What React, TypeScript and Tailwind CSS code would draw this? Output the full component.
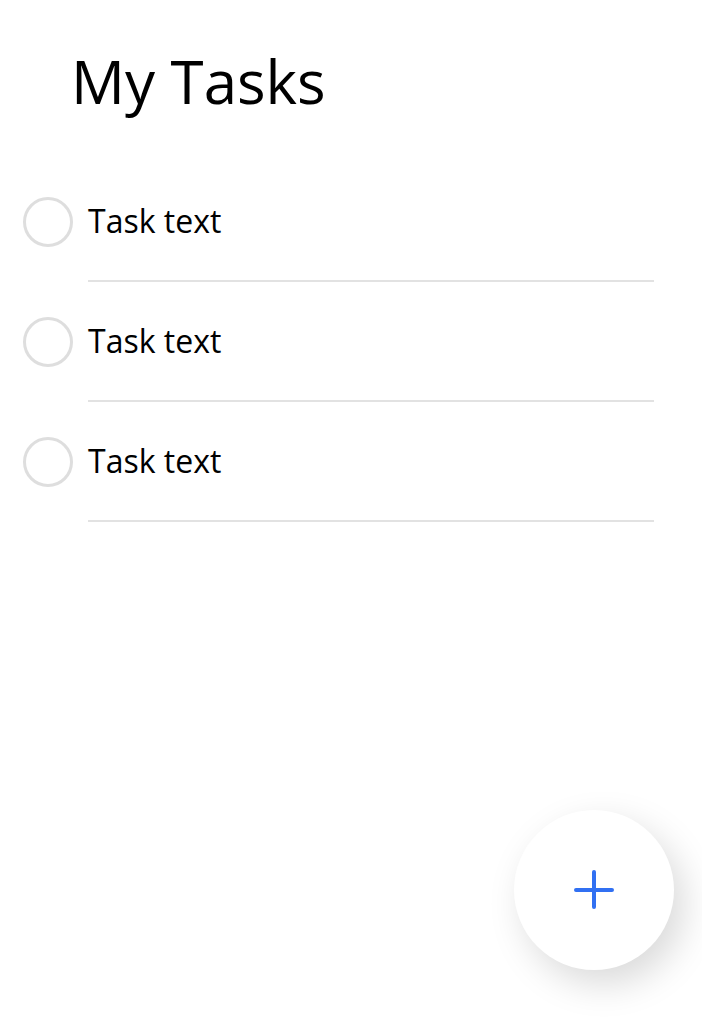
import React from 'react';

const tasks = ['Task text', 'Task text', 'Task text'];

function PlusIcon(): React.ReactElement {
  return (
    <svg width="40" height="40" viewBox="0 0 40 40" fill="none">
      <path d="M20 2v35M2 20h36" stroke="#3170f2" strokeWidth="4" strokeLinecap="round" />
    </svg>
  );
}

export default function App(): React.ReactElement {
  return (
    <div className="relative min-h-screen bg-white text-black" style={{ fontFamily: '"Open Sans", "Noto Sans", sans-serif' }}>
      <h1 className="pt-[40px] pl-[71px] text-[60px] leading-[82px] font-normal">My Tasks</h1>

      <ul className="mt-[40px]">
        {tasks.map((t, i) => (
          <li key={i} className="flex">
            <div className="flex items-center pl-[23px] pr-[15px]">
              <span className="block w-[50px] h-[50px] rounded-full border-[3px] border-[#dedede]" />
            </div>
            <div className="flex-1 mr-[48px] h-[120px] flex items-center border-b-2 border-[#e2e2e2]">
              <span className="text-[32px]">{t}</span>
            </div>
          </li>
        ))}
      </ul>

      <button className="absolute right-[28px] top-[810px] w-[160px] h-[160px] rounded-full bg-white flex items-center justify-center shadow-[10px_14px_36px_rgba(0,0,0,0.15)]">
        <PlusIcon />
      </button>
    </div>
  );
}
